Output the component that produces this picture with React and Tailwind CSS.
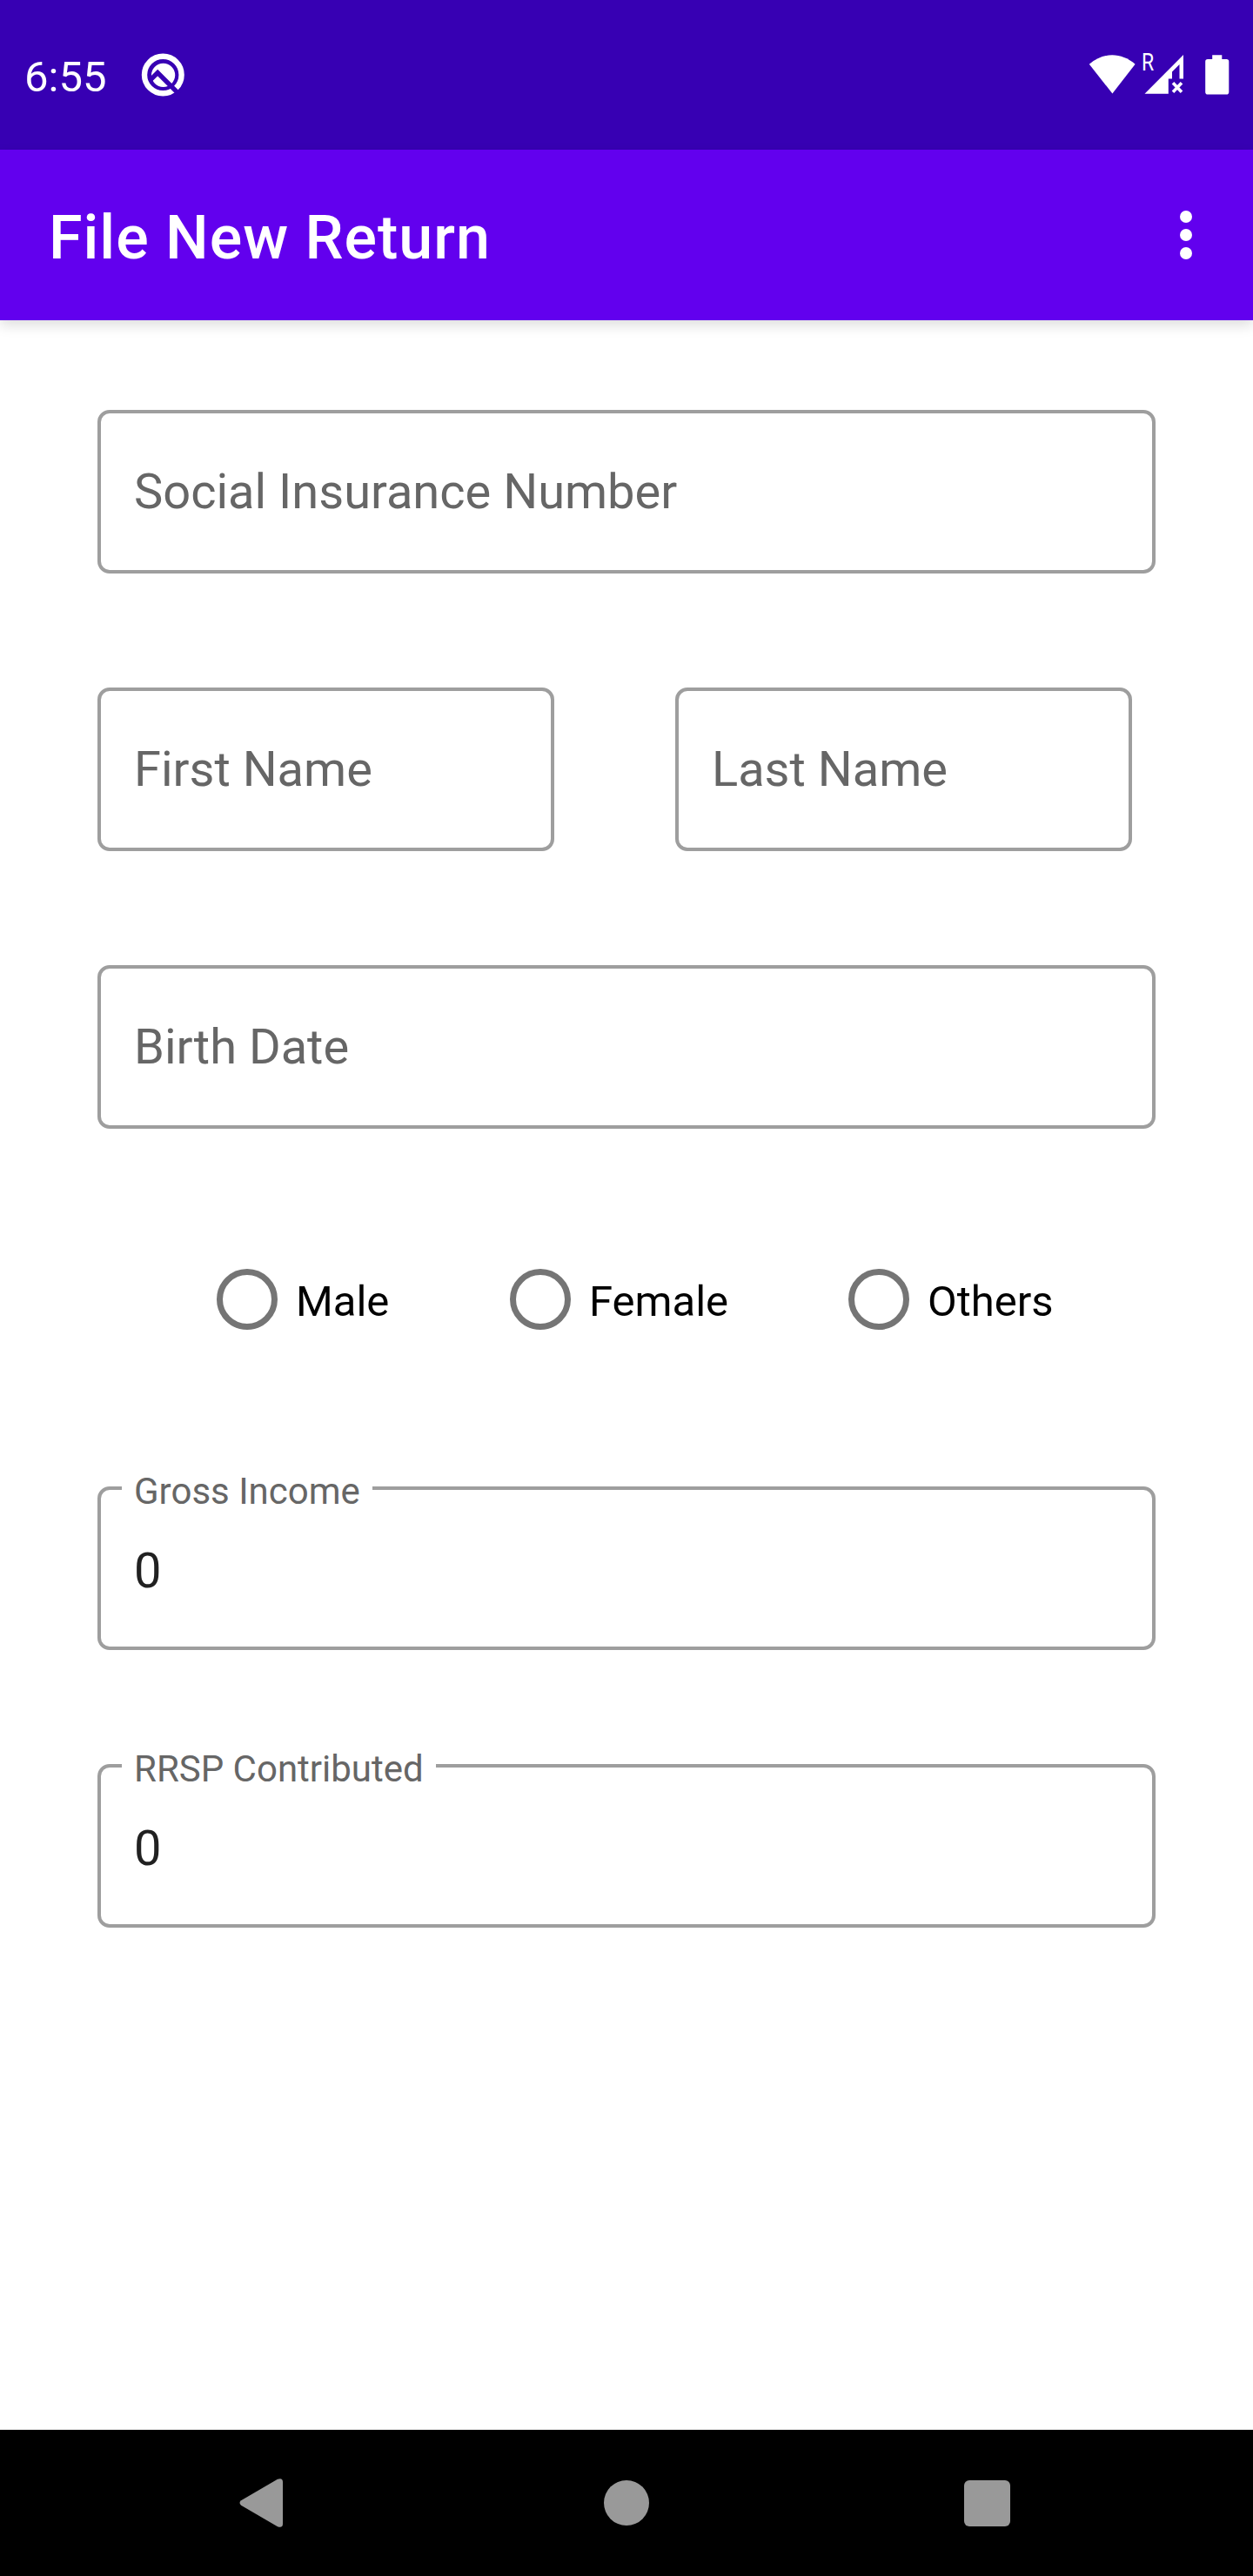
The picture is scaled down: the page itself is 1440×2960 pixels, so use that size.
function StatusBar() {
  return (
    <div className="flex h-[172px] items-start bg-[#3700b3] text-white">
      <span className="ml-[28px] mt-[59px] w-[95px] text-[49px] leading-[60px]">6:55</span>
      <svg className="ml-[39px] mt-[60px]" width="52" height="52" viewBox="0 0 52 52" fill="none">
        <circle cx="25.3" cy="26" r="21.3" stroke="#fff" strokeWidth="6.4" />
        <circle cx="25.6" cy="26.3" r="13.6" fill="#fff" />
        <path d="M10 32.700 L19.200 23.500 L44 48.300" stroke="#3700b3" strokeWidth="5.400" />
      </svg>
      <svg className="ml-auto mt-[62px]" width="54" height="46" viewBox="0 0 54 46" fill="#fff">
        <path d="M0.8 11.8 C17 -2.2 37.500 -2.200 53.600 11.800 L27.400 45.500 Z" />
      </svg>
      <span className="ml-[7px] mt-[56px] w-[16px] origin-left scale-x-[0.82] text-[28px] leading-[32px]">R</span>
      <svg className="-ml-[13px] mt-[62px]" width="46" height="46" viewBox="0 0 46 46">
        <path
          fillRule="evenodd"
          fill="#fff"
          d="M45 1 V28.500 H40.500 V12 L32 20.500 V28.500 H27.800 V45.700 H0.500 Z"
        />
        <path d="M33 33.300 L43 43.700 M43 33.300 L33 43.700" stroke="#fff" strokeWidth="3.600" />
      </svg>
      <svg className="ml-[24px] mr-[27px] mt-[62px]" width="28" height="48" viewBox="0 0 28 48" fill="#fff">
        <path d="M8.200 1.300 H19.300 V6 H24.500 Q27.300 6 27.300 8.800 V43.800 Q27.300 46.600 24.500 46.600 H3 Q0.200 46.600 0.200 43.800 V8.800 Q0.200 6 3 6 H8.200 Z" />
      </svg>
    </div>
  );
}

function AppBar() {
  return (
    <header className="relative flex h-[196px] items-center justify-between bg-[#6200ee] pl-[56px] pr-[70px] text-white shadow-[0_6px_14px_rgba(0,0,0,0.13)]">
      <h1 className="mt-[6px] text-[70px] font-medium leading-[84px] tracking-[0.014em]">File New Return</h1>
      <button className="flex flex-col gap-[7px]" aria-label="More options">
        <span className="size-[14px] rounded-full bg-white" />
        <span className="size-[14px] rounded-full bg-white" />
        <span className="size-[14px] rounded-full bg-white" />
      </button>
    </header>
  );
}

function Field({ label }) {
  return (
    <input
      placeholder={label}
      className="block h-[188px] w-full min-w-0 rounded-[14px] border-4 border-[#9e9e9e] bg-white px-[38px] text-[56px] text-[#212121] placeholder:text-[#666666]"
    />
  );
}

function FilledField({ label, value }) {
  return (
    <div className="relative flex h-[188px] items-center rounded-[14px] border-4 border-[#9e9e9e] bg-white px-[38px]">
      <label className="absolute -top-[23px] left-[24px] bg-white px-[14px] text-[42px] leading-[50px] text-[#666666]">
        {label}
      </label>
      <span className="mt-[6px] text-[56px] text-[#212121]">{value}</span>
    </div>
  );
}

function Radio({ label, className }) {
  return (
    <label className={`flex items-center gap-[21px] ${className}`}>
      <span className="size-[70px] shrink-0 rounded-full border-[7px] border-[#757575]" />
      <span className="mt-[6px] text-[49px] leading-[60px] text-black">{label}</span>
    </label>
  );
}

function NavBar() {
  return (
    <nav className="flex h-[168px] items-center bg-black">
      <svg className="ml-[275px]" width="50" height="58" viewBox="0 0 50 58" fill="#999">
        <path d="M2 26.300 L44 1.800 Q50 -0.300 50 5 V53 Q50 58.300 44 56.200 L2 31.700 Q-1 29 2 26.300 Z" />
      </svg>
      <span className="ml-[369px] size-[52px] rounded-full bg-[#999]" />
      <span className="ml-[362px] size-[53px] rounded-[6px] bg-[#999]" />
    </nav>
  );
}

export default function App() {
  return (
    <div className="flex h-[2960px] w-[1440px] flex-col overflow-hidden bg-white font-[Roboto,sans-serif]">
      <StatusBar />
      <AppBar />
      <main className="flex flex-1 flex-col px-[112px] pt-[103px]">
        <Field label="Social Insurance Number" />
        <div className="mt-[131px] grid grid-cols-[525px_525px] gap-[139px]">
          <Field label="First Name" />
          <Field label="Last Name" />
        </div>
        <div className="mt-[131px]">
          <Field label="Birth Date" />
        </div>
        <div className="mt-[161px] flex h-[70px] items-center pl-[137px]">
          <Radio label="Male" className="w-[337px]" />
          <Radio label="Female" className="w-[389px]" />
          <Radio label="Others" className="w-[260px]" />
        </div>
        <div className="mt-[180px]">
          <FilledField label="Gross Income" value="0" />
        </div>
        <div className="mt-[131px]">
          <FilledField label="RRSP Contributed" value="0" />
        </div>
      </main>
      <NavBar />
    </div>
  );
}
